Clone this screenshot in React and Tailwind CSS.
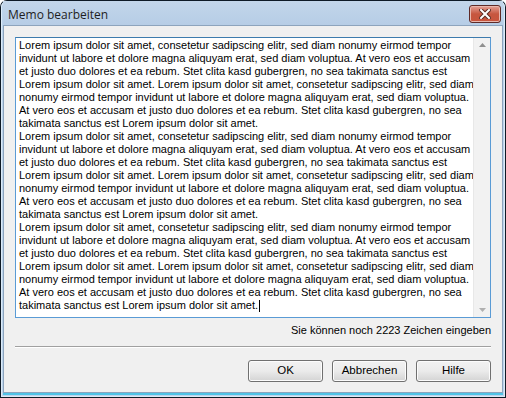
import React from 'react';

const para = [
  'Lorem ipsum dolor sit amet, consetetur sadipscing elitr, sed diam nonumy eirmod tempor',
  'invidunt ut labore et dolore magna aliquyam erat, sed diam voluptua. At vero eos et accusam',
  'et justo duo dolores et ea rebum. Stet clita kasd gubergren, no sea takimata sanctus est',
  'Lorem ipsum dolor sit amet. Lorem ipsum dolor sit amet, consetetur sadipscing elitr, sed diam',
  'nonumy eirmod tempor invidunt ut labore et dolore magna aliquyam erat, sed diam voluptua.',
  'At vero eos et accusam et justo duo dolores et ea rebum. Stet clita kasd gubergren, no sea',
  'takimata sanctus est Lorem ipsum dolor sit amet.',
];
const lines = [...para, ...para, ...para];

function Button({ children }) {
  return (
    <button className="w-[75px] h-[22px] rounded-[3px] border border-[#707070] bg-gradient-to-b from-[#f2f2f2] via-[#ebebeb] to-[#d4d4d4] text-[11.5px] text-black shadow-[inset_0_0_0_1px_#fcfcfc]">
      {children}
    </button>
  );
}

export default function App() {
  return (
    <div className="w-[506px] h-[398px] bg-[#0e1a26] rounded-t-[7px] p-px flex flex-col" style={{ fontFamily: '"Liberation Sans", Arial, sans-serif' }}>
      <div className="flex-1 flex flex-col rounded-t-[6px] bg-[#bcd4ec] px-[2px] pb-[2px] shadow-[inset_0_0_0_1px_#dcebf8]">
        {/* Title bar */}
        <div className="h-[24px] flex items-center justify-between pl-[5px] pr-[2px] bg-gradient-to-b from-[#c3d6ea] to-[#b6cde6]">
          <span className="text-[12px] text-[#1e1e1e] mt-[3px]" style={{ fontFamily: '"Open Sans", "DejaVu Sans", sans-serif' }}>Memo bearbeiten</span>
          <div className="w-[32px] h-[18px] mt-[2px] rounded-[3px] border border-[#5e2a27] bg-gradient-to-b from-[#e4a197] via-[#c6563f] to-[#c9553d] flex items-center justify-center shadow-[inset_0_0_0_1px_#e8b7ad]">
            <svg width="12" height="10" viewBox="0 0 12 10">
              <path d="M2 1 L10 9 M10 1 L2 9" stroke="#5a2a22" strokeWidth="4" strokeLinecap="square" />
              <path d="M2 1 L10 9 M10 1 L2 9" stroke="#ffffff" strokeWidth="2" strokeLinecap="square" />
            </svg>
          </div>
        </div>
        {/* Client */}
        <div className="flex-1 bg-[#f0f0f0] border border-[#8da4bd] flex flex-col px-[11px] pt-[11px]">
          <div className="h-[281px] flex border border-[#5a9bd5] border-t-[#3d7bad] bg-white">
            <div className="flex-1 min-w-0 overflow-hidden pl-[3px] pt-[1px] text-[11px] leading-[13px] text-black">
              {lines.map((l, i) => (
                <div key={i} className="whitespace-nowrap">
                  {l}
                  {i === lines.length - 1 && <span className="inline-block w-px h-[12px] bg-black align-middle ml-px" />}
                </div>
              ))}
            </div>
            <div className="w-[17px] shrink-0 bg-[#f2f2f2] border-l border-[#e8e8e8] flex flex-col justify-between items-center py-[5px]">
              <svg width="7" height="4" viewBox="0 0 7 4"><path d="M0 4 L3.5 0 L7 4Z" fill="#909090" /></svg>
              <svg width="7" height="4" viewBox="0 0 7 4"><path d="M0 0 L3.5 4 L7 0Z" fill="#b0b0b0" /></svg>
            </div>
          </div>
          <div className="text-right text-[11px] text-black mt-[6px] leading-[13px]">Sie können noch 2223 Zeichen eingeben</div>
          <div className="mt-[9px] h-[2px] border-t border-[#a0a0a0] border-b border-b-white" />
          <div className="mt-[12px] flex justify-end gap-[9px]">
            <Button>OK</Button>
            <Button>Abbrechen</Button>
            <Button>Hilfe</Button>
          </div>
        </div>
        <div className="h-[2px] bg-[#4fc3e6]" />
      </div>
    </div>
  );
}
